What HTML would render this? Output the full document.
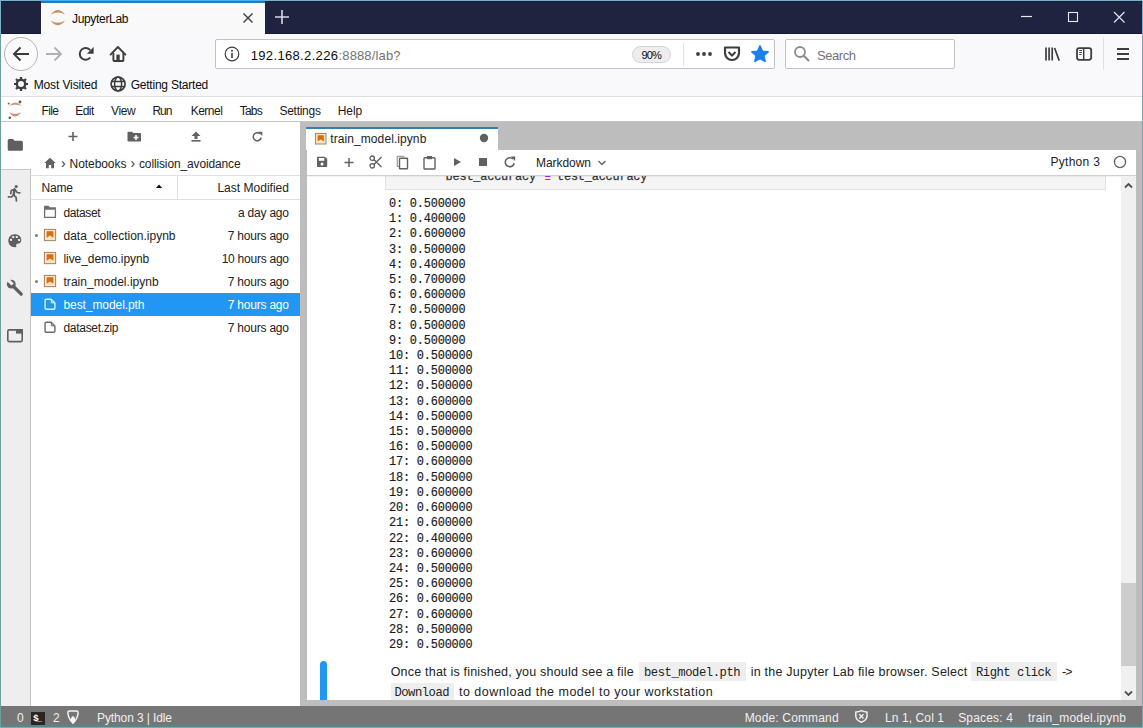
<!DOCTYPE html>
<html><head><meta charset="utf-8">
<style>
*{box-sizing:border-box;margin:0;padding:0}
html,body{width:1143px;height:728px;overflow:hidden;background:#fff;font-family:"Liberation Sans",sans-serif}
.a{position:absolute}
.t{position:absolute;white-space:nowrap;line-height:1}
svg.a{overflow:visible}
</style></head><body>
<div class="a" style="left:0px;top:0px;width:1143px;height:728px;background:#7eb0c8"></div>
<div class="a" style="left:0px;top:34px;width:1px;height:694px;background:#6fa0a0"></div>
<div class="a" style="left:1142px;top:34px;width:1px;height:694px;background:#72a8aa"></div>
<div class="a" style="left:0px;top:727px;width:1143px;height:1px;background:#7eaaaa"></div>
<div class="a" style="left:1px;top:1px;width:1141px;height:1px;background:#0a2540"></div>
<div class="a" style="left:1px;top:2px;width:1141px;height:32px;background:#202340"></div>
<div class="a" style="left:1px;top:33px;width:1141px;height:1px;background:#141a30"></div>
<div class="a" style="left:41px;top:1px;width:224px;height:33px;background:#f9f9fa"></div>
<div class="a" style="left:41px;top:0px;width:224px;height:1px;background:#40b0f0"></div>
<div class="a" style="left:41px;top:1px;width:224px;height:2px;background:#2a7cb0"></div>
<svg class="a" style="left:0px;top:0px;" width="80" height="34" viewBox="0 0 80 34"><path d="M50.5 14.8 Q57.8 5.2 65.2 14.8 Q57.8 10.2 50.5 14.8 Z" fill="#c9925e"/><path d="M50.5 20.5 Q57.8 29.9 65.2 20.5 Q57.8 25.1 50.5 20.5 Z" fill="#c9925e"/></svg>
<div class="t" style="left:72.00px;top:12.64px;font-size:12px;color:#0c0c0d;letter-spacing:-0.330px;font-family:'Liberation Sans',sans-serif;">JupyterLab</div>
<svg class="a" style="left:242px;top:12px;" width="12" height="12" viewBox="0 0 12 12"><path d="M1.5 1.5 L10.5 10.5 M10.5 1.5 L1.5 10.5" stroke="#3a3a3a" stroke-width="1.4"/></svg>
<svg class="a" style="left:274px;top:9px;" width="16" height="16" viewBox="0 0 16 16"><path d="M8 1 V15 M1 8 H15" stroke="#d8d8ec" stroke-width="1.6"/></svg>
<svg class="a" style="left:1020px;top:10px;" width="14" height="12" viewBox="0 0 14 12"><path d="M1 6.5 H12" stroke="#e8e8f0" stroke-width="1.2"/></svg>
<svg class="a" style="left:1066px;top:10px;" width="14" height="14" viewBox="0 0 14 14"><rect x="2.5" y="2.5" width="9" height="9" stroke="#e8e8f0" stroke-width="1.1" fill="none"/></svg>
<svg class="a" style="left:1112px;top:11px;" width="14" height="14" viewBox="0 0 14 14"><path d="M2 1 L12.5 11.5 M12.5 1 L2 11.5" stroke="#e8e8f0" stroke-width="1.1"/></svg>
<div class="a" style="left:1px;top:34px;width:1141px;height:62px;background:#f9f9fb"></div>
<div class="a" style="left:1px;top:96px;width:1141px;height:1px;background:#dfdfe1"></div>
<div class="a" style="left:4px;top:37px;width:34px;height:34px;border-radius:50%;border:1px solid #b4b4b4;background:#fbfbfb"></div>
<svg class="a" style="left:12px;top:46px;" width="18" height="16" viewBox="0 0 18 16"><path d="M2 8 H17 M8.5 1.5 L2 8 L8.5 14.5" stroke="#3a3a3a" stroke-width="1.9" fill="none"/></svg>
<svg class="a" style="left:45px;top:46px;" width="18" height="16" viewBox="0 0 18 16"><path d="M1 8 H16 M9.5 1.5 L16 8 L9.5 14.5" stroke="#b0b0b0" stroke-width="1.8" fill="none"/></svg>
<svg class="a" style="left:74px;top:40px" width="60" height="28" viewBox="74 40 60 28"><path d="M90.3 57.5 A5.9 5.9 0 1 1 90.2 50.1" stroke="#3d3d3d" stroke-width="2" fill="none"/><path d="M93.6 47 V53.8 H86.9 Z" fill="#3d3d3d"/></svg>
<svg class="a" style="left:74px;top:40px" width="60" height="28" viewBox="74 40 60 28"><path d="M110.6 54.6 L117.9 47 L125.4 54.6" stroke="#3d3d3d" stroke-width="1.9" fill="none" stroke-linecap="round" stroke-linejoin="round"/><path d="M113.4 53 V60.2 Q113.4 61 114.2 61 H122.6 Q123.4 61 123.4 60.2 V53" stroke="#3d3d3d" stroke-width="1.9" fill="none"/><rect x="116.4" y="54.6" width="3.3" height="6" fill="#3d3d3d"/></svg>
<div class="a" style="left:215px;top:39px;width:560px;height:30px;border:1px solid #c2c2c4;border-radius:2px;background:#fff"></div>
<svg class="a" style="left:224px;top:46px;" width="16" height="16" viewBox="0 0 16 16"><circle cx="8" cy="8" r="6.8" stroke="#3d3d3d" stroke-width="1.2" fill="none"/><rect x="7.2" y="7" width="1.6" height="5" fill="#3d3d3d"/><circle cx="8" cy="4.7" r="1" fill="#3d3d3d"/></svg>
<div class="t" style="left:250.70px;top:48.90px;font-size:13px;color:#0c0c0d;letter-spacing:0.348px;font-family:'Liberation Sans',sans-serif;">192.168.2.226</div>
<div class="t" style="left:338.50px;top:48.90px;font-size:13px;color:#737373;letter-spacing:0.143px;font-family:'Liberation Sans',sans-serif;">:8888/lab?</div>
<div class="a" style="left:632px;top:46px;width:39px;height:17px;border:1px solid #d4d4d6;border-radius:9px;background:#ededf0"></div>
<div class="t" style="left:641.50px;top:49.79px;font-size:11px;color:#0c0c0d;letter-spacing:-0.908px;font-family:'Liberation Sans',sans-serif;">90%</div>
<div class="a" style="left:683px;top:43px;width:1px;height:23px;background:#e0e0e2"></div>
<svg class="a" style="left:694px;top:49px;" width="20" height="10" viewBox="0 0 20 10"><circle cx="4" cy="5" r="1.9" fill="#3d3d3d"/><circle cx="10" cy="5" r="1.9" fill="#3d3d3d"/><circle cx="16" cy="5" r="1.9" fill="#3d3d3d"/></svg>
<svg class="a" style="left:722px;top:45px;" width="20" height="18" viewBox="0 0 20 18"><path d="M3 2.5 H17 V8 A7 7 0 0 1 3 8 Z" stroke="#3d3d3d" stroke-width="2.2" fill="none" stroke-linejoin="round"/><path d="M6.5 7 L10 10.5 L13.5 7" stroke="#3d3d3d" stroke-width="2" fill="none"/></svg>
<svg class="a" style="left:751px;top:45px;" width="18" height="18" viewBox="0 0 18 18"><path d="M9 1 L11.3 6.3 L17 6.8 L12.7 10.6 L14 16.3 L9 13.3 L4 16.3 L5.3 10.6 L1 6.8 L6.7 6.3 Z" fill="#1a80f0" stroke="#1a80f0" stroke-width="1.8" stroke-linejoin="round"/></svg>
<div class="a" style="left:785px;top:39px;width:170px;height:30px;border:1px solid #c2c2c4;border-radius:2px;background:#fff"></div>
<svg class="a" style="left:793px;top:45px;" width="18" height="18" viewBox="0 0 18 18"><circle cx="7" cy="7" r="5" stroke="#8a8a8a" stroke-width="1.8" fill="none"/><path d="M10.5 10.5 L16 16" stroke="#8a8a8a" stroke-width="2"/></svg>
<div class="t" style="left:817.00px;top:48.50px;font-size:13px;color:#737373;letter-spacing:-0.438px;font-family:'Liberation Sans',sans-serif;">Search</div>
<svg class="a" style="left:1036px;top:40px" width="100" height="28" viewBox="1036 40 100 28"><path d="M1046 47.5 V60.6 M1049.1 47.5 V60.6 M1052.2 47.5 V60.6 M1054.6 48 L1059.2 60.6" stroke="#3d3d3d" stroke-width="1.7" fill="none"/></svg>
<svg class="a" style="left:1036px;top:40px" width="100" height="28" viewBox="1036 40 100 28"><rect x="1077" y="48.2" width="14.2" height="11.6" rx="2.2" stroke="#3d3d3d" stroke-width="1.8" fill="none"/><path d="M1083.7 48.5 V59.5" stroke="#3d3d3d" stroke-width="1.5"/><path d="M1079.3 50.5 H1082 M1079.3 52.5 H1082 M1079.3 54.5 H1081.5" stroke="#3d3d3d" stroke-width="1"/></svg>
<div class="a" style="left:1103px;top:37px;width:1px;height:33px;background:#e0e0e2"></div>
<svg class="a" style="left:1115px;top:46px;" width="16" height="16" viewBox="0 0 16 16"><path d="M2 3 H14 M2 8 H14 M2 13 H14" stroke="#3d3d3d" stroke-width="2"/></svg>
<svg class="a" style="left:13px;top:76px;" width="16" height="16" viewBox="0 0 16 16"><circle cx="8" cy="8" r="4.2" stroke="#3d3d3d" stroke-width="2.4" fill="none"/><path d="M8 1 V3.5 M8 12.5 V15 M1 8 H3.5 M12.5 8 H15 M3 3 L4.8 4.8 M11.2 11.2 L13 13 M13 3 L11.2 4.8 M4.8 11.2 L3 13" stroke="#3d3d3d" stroke-width="2.2"/></svg>
<div class="t" style="left:33.70px;top:78.54px;font-size:12px;color:#0c0c0d;letter-spacing:-0.121px;font-family:'Liberation Sans',sans-serif;">Most Visited</div>
<svg class="a" style="left:104px;top:72px" width="28" height="24" viewBox="104 72 28 24"><circle cx="118.1" cy="84" r="7" stroke="#3d3d3d" stroke-width="1.7" fill="none"/><ellipse cx="118.1" cy="84" rx="3.5" ry="7" stroke="#3d3d3d" stroke-width="1.5" fill="none"/><path d="M111 81.4 H125.2 M111 86.5 H125.2" stroke="#3d3d3d" stroke-width="1.5"/></svg>
<div class="t" style="left:130.70px;top:78.54px;font-size:12px;color:#0c0c0d;letter-spacing:-0.222px;font-family:'Liberation Sans',sans-serif;">Getting Started</div>
<div class="a" style="left:1px;top:97px;width:1141px;height:629px;background:#fff"></div>
<div class="a" style="left:1px;top:97px;width:1141px;height:24px;background:#fff"></div>
<div class="a" style="left:1px;top:121px;width:1141px;height:1px;background:#c4c4c4"></div>
<svg class="a" style="left:0px;top:96px;" width="30" height="26" viewBox="0 0 30 26"><path d="M9 10 Q15.3 3.2 21.6 10 Q15.3 7.6 9 10 Z" fill="#c99a78"/><path d="M9 16.3 Q15.2 24.6 21.4 16.3 Q15.2 19.8 9 16.3 Z" fill="#d48a6a"/><circle cx="20" cy="6" r="1.4" fill="#5a5a5a"/><circle cx="8.7" cy="7.5" r="1" fill="#6a6a6a"/><circle cx="9.8" cy="21.8" r="1.3" fill="#5a5a5a"/></svg>
<div class="t" style="left:41.60px;top:104.64px;font-size:12px;color:#1a1a1a;letter-spacing:-0.645px;font-family:'Liberation Sans',sans-serif;">File</div>
<div class="t" style="left:75.30px;top:104.64px;font-size:12px;color:#1a1a1a;letter-spacing:-0.559px;font-family:'Liberation Sans',sans-serif;">Edit</div>
<div class="t" style="left:111.10px;top:104.64px;font-size:12px;color:#1a1a1a;letter-spacing:-0.431px;font-family:'Liberation Sans',sans-serif;">View</div>
<div class="t" style="left:152.50px;top:104.64px;font-size:12px;color:#1a1a1a;letter-spacing:-1.056px;font-family:'Liberation Sans',sans-serif;">Run</div>
<div class="t" style="left:190.70px;top:104.64px;font-size:12px;color:#1a1a1a;letter-spacing:-0.497px;font-family:'Liberation Sans',sans-serif;">Kernel</div>
<div class="t" style="left:239.70px;top:104.64px;font-size:12px;color:#1a1a1a;letter-spacing:-0.782px;font-family:'Liberation Sans',sans-serif;">Tabs</div>
<div class="t" style="left:279.50px;top:104.64px;font-size:12px;color:#1a1a1a;letter-spacing:-0.280px;font-family:'Liberation Sans',sans-serif;">Settings</div>
<div class="t" style="left:337.70px;top:104.64px;font-size:12px;color:#1a1a1a;letter-spacing:-0.060px;font-family:'Liberation Sans',sans-serif;">Help</div>
<div class="a" style="left:1px;top:122px;width:30px;height:584px;background:#eeeeee"></div>
<div class="a" style="left:1px;top:122px;width:30px;height:47px;background:#fff"></div>
<div class="a" style="left:1px;top:169px;width:30px;height:1px;background:#c8c8c8"></div>
<div class="a" style="left:30px;top:169px;width:1px;height:537px;background:#c6c6c6"></div>
<svg class="a" style="left:0px;top:130px" width="30" height="30" viewBox="0 130 30 30"><path d="M7.7 140.5 Q7.7 139 9.2 139 H13 L14.5 140.8 H21.4 Q22.9 140.8 22.9 142.3 V149.3 Q22.9 150.8 21.4 150.8 H9.2 Q7.7 150.8 7.7 149.3 Z" fill="#5f5f5f"/></svg>
<svg class="a" style="left:0px;top:180px" width="30" height="26" viewBox="0 180 30 26"><circle cx="16.2" cy="186.5" r="1.6" fill="#5f5f5f"/><path d="M14.6 189.4 L11.2 190.6 L10.8 193.6 M14.6 189.4 L13.6 195 L11.5 197 L8.4 196.9 M13.6 195 L16.1 197.4 L16.4 201 M15 189.6 L17.2 192.5 L19.8 192.9" stroke="#5f5f5f" stroke-width="1.7" fill="none" stroke-linecap="round" stroke-linejoin="round"/><path d="M14.6 189.4 L13.6 195" stroke="#5f5f5f" stroke-width="2.4" stroke-linecap="round"/></svg>
<svg class="a" style="left:0px;top:228px" width="30" height="24" viewBox="0 228 30 24"><path d="M14.8 234.3 C18.5 234.3 21.3 236.6 21.3 240 C21.3 242.8 19.2 243.8 17.6 243.8 C16.2 243.8 15.9 245.3 16.3 246.2 C16.5 246.8 16 247.3 15 247.3 C11.2 247.3 8.3 244.5 8.3 240.8 C8.3 237.2 11 234.3 14.8 234.3 Z" fill="#5f5f5f"/><rect x="12.2" y="236" width="2" height="2" fill="#eee"/><rect x="15.8" y="236" width="2" height="2" fill="#eee"/><rect x="10" y="238.8" width="2" height="2" fill="#eee"/><rect x="18.1" y="239" width="2" height="2" fill="#eee"/></svg>
<svg class="a" style="left:0px;top:274px" width="30" height="26" viewBox="0 274 30 26"><path d="M13 286 L21.2 294.2" stroke="#5f5f5f" stroke-width="3.2" stroke-linecap="round"/><circle cx="11.3" cy="284.2" r="4.4" fill="#5f5f5f"/><path d="M9.6 279.2 L13.8 283.4 L11.5 285.6 L7.3 281.4 Z" fill="#eee"/></svg>
<svg class="a" style="left:0px;top:322px" width="30" height="26" viewBox="0 322 30 26"><rect x="7.8" y="329.9" width="14.4" height="11.7" rx="1.3" stroke="#5f5f5f" stroke-width="1.6" fill="none"/><rect x="16" y="329.1" width="7" height="4.5" fill="#5f5f5f"/></svg>
<div class="a" style="left:31px;top:122px;width:269px;height:584px;background:#fff"></div>
<svg class="a" style="left:68px;top:131px;" width="10" height="11" viewBox="0 0 10 11"><path d="M5 1 V10 M0.5 5.5 H9.5" stroke="#616161" stroke-width="1.6"/></svg>
<svg class="a" style="left:127px;top:131px;" width="15" height="11" viewBox="0 0 15 11"><path d="M0.5 1.5 Q0.5 0.7 1.3 0.7 H5 L6.3 2 H13.2 Q14 2 14 2.8 V9.7 Q14 10.5 13.2 10.5 H1.3 Q0.5 10.5 0.5 9.7 Z" fill="#616161"/><path d="M9 4 V9 M6.5 6.5 H11.5" stroke="#fff" stroke-width="1.6"/></svg>
<svg class="a" style="left:191px;top:131px;" width="10" height="11" viewBox="0 0 10 11"><path d="M5 0.5 L9.5 5 H6.5 V8 H3.5 V5 H0.5 Z" fill="#616161"/><rect x="0.5" y="9" width="9" height="1.6" fill="#616161"/></svg>
<svg class="a" style="left:252px;top:131px;" width="11" height="11" viewBox="0 0 11 11"><path d="M9.2 6.5 A4 4 0 1 1 8 2.8" stroke="#616161" stroke-width="1.5" fill="none"/><path d="M6.2 0.8 L10.3 0.8 L10.3 4.9 Z" fill="#616161"/></svg>
<svg class="a" style="left:44px;top:157px;" width="12" height="12" viewBox="0 0 12 12"><path d="M6 0.8 L0.3 6 H2 V11.2 H4.8 V8 H7.2 V11.2 H10 V6 H11.7 Z" fill="#616161"/></svg>
<div class="t" style="left:61.00px;top:155.85px;font-size:14px;color:#333;letter-spacing:0.000px;font-family:'Liberation Sans',sans-serif;">›</div>
<div class="t" style="left:69.60px;top:157.54px;font-size:12px;color:#222;letter-spacing:-0.071px;font-family:'Liberation Sans',sans-serif;">Notebooks</div>
<div class="t" style="left:130.50px;top:155.85px;font-size:14px;color:#333;letter-spacing:0.000px;font-family:'Liberation Sans',sans-serif;">›</div>
<div class="t" style="left:139.00px;top:157.54px;font-size:12px;color:#222;letter-spacing:-0.137px;font-family:'Liberation Sans',sans-serif;">collision_avoidance</div>
<div class="a" style="left:31px;top:175px;width:269px;height:1px;background:#e0e0e0"></div>
<div class="a" style="left:31px;top:199px;width:269px;height:1px;background:#e0e0e0"></div>
<div class="a" style="left:177px;top:176px;width:1px;height:23px;background:#e0e0e0"></div>
<div class="t" style="left:41.50px;top:182.04px;font-size:12px;color:#222;letter-spacing:-0.169px;font-family:'Liberation Sans',sans-serif;">Name</div>
<svg class="a" style="left:150px;top:180px" width="16" height="10" viewBox="150 180 16 10"><path d="M155.9 187.9 L159.05 184.4 L162.2 187.9 Z" fill="#111"/></svg>
<div class="t" style="left:217.40px;top:182.04px;font-size:12px;color:#222;letter-spacing:0.019px;font-family:'Liberation Sans',sans-serif;">Last Modified</div>
<svg class="a" style="left:43px;top:205px;" width="14" height="14" viewBox="0 0 14 14"><path d="M1.6 4 V12.4 H12.4 V4.5" stroke="#6e6e6e" stroke-width="1.3" fill="none"/><path d="M1 1.2 Q1 0.8 1.5 0.8 H5.5 L6.8 2.2 H12.5 Q13 2.2 13 2.7 V4.8 H1 Z" fill="#6e6e6e"/></svg>
<div class="t" style="left:63.50px;top:207.04px;font-size:12px;color:#222;letter-spacing:-0.393px;font-family:'Liberation Sans',sans-serif;">dataset</div>
<div class="t" style="left:238.00px;top:207.04px;font-size:12px;color:#222;letter-spacing:-0.213px;font-family:'Liberation Sans',sans-serif;">a day ago</div>
<svg class="a" style="left:43px;top:228px;" width="14" height="14" viewBox="0 0 14 14"><rect x="1.4" y="1.4" width="11.2" height="11.2" fill="#ffe6c2" stroke="#a88a6a" stroke-width="1.1"/><path d="M3.6 3.2 H10.4 V9.8 L7 7.6 L3.6 9.8 Z" fill="#da6c14"/></svg>
<div class="a" style="left:35px;top:234px;width:3px;height:3px;background:#5f8f6f;border-radius:50%"></div>
<div class="t" style="left:63.50px;top:230.04px;font-size:12px;color:#222;letter-spacing:-0.004px;font-family:'Liberation Sans',sans-serif;">data_collection.ipynb</div>
<div class="t" style="left:227.70px;top:230.04px;font-size:12px;color:#222;letter-spacing:-0.208px;font-family:'Liberation Sans',sans-serif;">7 hours ago</div>
<svg class="a" style="left:43px;top:251px;" width="14" height="14" viewBox="0 0 14 14"><rect x="1.4" y="1.4" width="11.2" height="11.2" fill="#ffe6c2" stroke="#a88a6a" stroke-width="1.1"/><path d="M3.6 3.2 H10.4 V9.8 L7 7.6 L3.6 9.8 Z" fill="#da6c14"/></svg>
<div class="t" style="left:63.50px;top:253.04px;font-size:12px;color:#222;letter-spacing:-0.072px;font-family:'Liberation Sans',sans-serif;">live_demo.ipynb</div>
<div class="t" style="left:221.70px;top:253.04px;font-size:12px;color:#222;letter-spacing:-0.250px;font-family:'Liberation Sans',sans-serif;">10 hours ago</div>
<svg class="a" style="left:43px;top:274px;" width="14" height="14" viewBox="0 0 14 14"><rect x="1.4" y="1.4" width="11.2" height="11.2" fill="#ffe6c2" stroke="#a88a6a" stroke-width="1.1"/><path d="M3.6 3.2 H10.4 V9.8 L7 7.6 L3.6 9.8 Z" fill="#da6c14"/></svg>
<div class="a" style="left:35px;top:280px;width:3px;height:3px;background:#5f8f6f;border-radius:50%"></div>
<div class="t" style="left:63.50px;top:276.04px;font-size:12px;color:#222;letter-spacing:0.030px;font-family:'Liberation Sans',sans-serif;">train_model.ipynb</div>
<div class="t" style="left:227.70px;top:276.04px;font-size:12px;color:#222;letter-spacing:-0.208px;font-family:'Liberation Sans',sans-serif;">7 hours ago</div>
<div class="a" style="left:31px;top:293px;width:269px;height:23px;background:#2196f3"></div>
<svg class="a" style="left:43px;top:297px;" width="14" height="14" viewBox="0 0 14 14"><path d="M2.1 3.3 Q2.1 2.2 3.2 2.2 H8.2 L11.9 5.9 V11.2 Q11.9 12.2 10.9 12.2 H3.2 Q2.1 12.2 2.1 11.1 Z" stroke="#d8f4ff" stroke-width="1.4" fill="none" stroke-linejoin="round"/><path d="M8.3 2.6 V5.8 H11.6" stroke="#d8f4ff" stroke-width="1" fill="none"/></svg>
<div class="t" style="left:63.50px;top:299.04px;font-size:12px;color:#fff;letter-spacing:-0.081px;font-family:'Liberation Sans',sans-serif;">best_model.pth</div>
<div class="t" style="left:227.70px;top:299.04px;font-size:12px;color:#fff;letter-spacing:-0.208px;font-family:'Liberation Sans',sans-serif;">7 hours ago</div>
<svg class="a" style="left:43px;top:320px;" width="14" height="14" viewBox="0 0 14 14"><path d="M2.1 3.3 Q2.1 2.2 3.2 2.2 H8.2 L11.9 5.9 V11.2 Q11.9 12.2 10.9 12.2 H3.2 Q2.1 12.2 2.1 11.1 Z" stroke="#6a6a6a" stroke-width="1.4" fill="none" stroke-linejoin="round"/><path d="M8.3 2.6 V5.8 H11.6" stroke="#6a6a6a" stroke-width="1" fill="none"/></svg>
<div class="t" style="left:63.50px;top:322.04px;font-size:12px;color:#222;letter-spacing:-0.303px;font-family:'Liberation Sans',sans-serif;">dataset.zip</div>
<div class="t" style="left:227.70px;top:322.04px;font-size:12px;color:#222;letter-spacing:-0.208px;font-family:'Liberation Sans',sans-serif;">7 hours ago</div>
<div class="a" style="left:300px;top:122px;width:842px;height:584px;background:#bdbdbd"></div>
<div class="a" style="left:307px;top:150px;width:829px;height:550px;background:#fff"></div>
<div class="a" style="left:385px;top:150px;width:721px;height:40px;background:#f5f5f5;border:1px solid #e0e0e0"></div>
<div class="t" style="left:445.60px;top:172.38px;font-size:11.9px;color:#333;letter-spacing:-0.195px;font-family:'Liberation Mono',monospace;-webkit-text-stroke:0.25px #333">best_accuracy</div>
<div class="t" style="left:544.50px;top:174.45px;font-size:10.5px;color:#aa22ff;letter-spacing:0.000px;font-family:'Liberation Mono',monospace;">=</div>
<div class="t" style="left:557.00px;top:172.38px;font-size:11.9px;color:#333;letter-spacing:-0.195px;font-family:'Liberation Mono',monospace;-webkit-text-stroke:0.25px #333">test_accuracy</div>
<div class="t" style="left:389.00px;top:198.88px;font-size:11.9px;color:#1a1a1a;letter-spacing:-0.186px;font-family:'Liberation Mono',monospace;-webkit-text-stroke:0.15px #1a1a1a">0: 0.500000</div>
<div class="t" style="left:389.00px;top:214.09px;font-size:11.9px;color:#1a1a1a;letter-spacing:-0.186px;font-family:'Liberation Mono',monospace;-webkit-text-stroke:0.15px #1a1a1a">1: 0.400000</div>
<div class="t" style="left:389.00px;top:229.30px;font-size:11.9px;color:#1a1a1a;letter-spacing:-0.186px;font-family:'Liberation Mono',monospace;-webkit-text-stroke:0.15px #1a1a1a">2: 0.600000</div>
<div class="t" style="left:389.00px;top:244.51px;font-size:11.9px;color:#1a1a1a;letter-spacing:-0.186px;font-family:'Liberation Mono',monospace;-webkit-text-stroke:0.15px #1a1a1a">3: 0.500000</div>
<div class="t" style="left:389.00px;top:259.72px;font-size:11.9px;color:#1a1a1a;letter-spacing:-0.186px;font-family:'Liberation Mono',monospace;-webkit-text-stroke:0.15px #1a1a1a">4: 0.400000</div>
<div class="t" style="left:389.00px;top:274.93px;font-size:11.9px;color:#1a1a1a;letter-spacing:-0.186px;font-family:'Liberation Mono',monospace;-webkit-text-stroke:0.15px #1a1a1a">5: 0.700000</div>
<div class="t" style="left:389.00px;top:290.14px;font-size:11.9px;color:#1a1a1a;letter-spacing:-0.186px;font-family:'Liberation Mono',monospace;-webkit-text-stroke:0.15px #1a1a1a">6: 0.600000</div>
<div class="t" style="left:389.00px;top:305.35px;font-size:11.9px;color:#1a1a1a;letter-spacing:-0.186px;font-family:'Liberation Mono',monospace;-webkit-text-stroke:0.15px #1a1a1a">7: 0.500000</div>
<div class="t" style="left:389.00px;top:320.56px;font-size:11.9px;color:#1a1a1a;letter-spacing:-0.186px;font-family:'Liberation Mono',monospace;-webkit-text-stroke:0.15px #1a1a1a">8: 0.500000</div>
<div class="t" style="left:389.00px;top:335.77px;font-size:11.9px;color:#1a1a1a;letter-spacing:-0.186px;font-family:'Liberation Mono',monospace;-webkit-text-stroke:0.15px #1a1a1a">9: 0.500000</div>
<div class="t" style="left:389.00px;top:350.98px;font-size:11.9px;color:#1a1a1a;letter-spacing:-0.182px;font-family:'Liberation Mono',monospace;-webkit-text-stroke:0.15px #1a1a1a">10: 0.500000</div>
<div class="t" style="left:389.00px;top:366.19px;font-size:11.9px;color:#1a1a1a;letter-spacing:-0.182px;font-family:'Liberation Mono',monospace;-webkit-text-stroke:0.15px #1a1a1a">11: 0.500000</div>
<div class="t" style="left:389.00px;top:381.40px;font-size:11.9px;color:#1a1a1a;letter-spacing:-0.182px;font-family:'Liberation Mono',monospace;-webkit-text-stroke:0.15px #1a1a1a">12: 0.500000</div>
<div class="t" style="left:389.00px;top:396.61px;font-size:11.9px;color:#1a1a1a;letter-spacing:-0.182px;font-family:'Liberation Mono',monospace;-webkit-text-stroke:0.15px #1a1a1a">13: 0.600000</div>
<div class="t" style="left:389.00px;top:411.82px;font-size:11.9px;color:#1a1a1a;letter-spacing:-0.182px;font-family:'Liberation Mono',monospace;-webkit-text-stroke:0.15px #1a1a1a">14: 0.500000</div>
<div class="t" style="left:389.00px;top:427.03px;font-size:11.9px;color:#1a1a1a;letter-spacing:-0.182px;font-family:'Liberation Mono',monospace;-webkit-text-stroke:0.15px #1a1a1a">15: 0.500000</div>
<div class="t" style="left:389.00px;top:442.24px;font-size:11.9px;color:#1a1a1a;letter-spacing:-0.182px;font-family:'Liberation Mono',monospace;-webkit-text-stroke:0.15px #1a1a1a">16: 0.500000</div>
<div class="t" style="left:389.00px;top:457.45px;font-size:11.9px;color:#1a1a1a;letter-spacing:-0.182px;font-family:'Liberation Mono',monospace;-webkit-text-stroke:0.15px #1a1a1a">17: 0.600000</div>
<div class="t" style="left:389.00px;top:472.66px;font-size:11.9px;color:#1a1a1a;letter-spacing:-0.182px;font-family:'Liberation Mono',monospace;-webkit-text-stroke:0.15px #1a1a1a">18: 0.500000</div>
<div class="t" style="left:389.00px;top:487.87px;font-size:11.9px;color:#1a1a1a;letter-spacing:-0.182px;font-family:'Liberation Mono',monospace;-webkit-text-stroke:0.15px #1a1a1a">19: 0.600000</div>
<div class="t" style="left:389.00px;top:503.08px;font-size:11.9px;color:#1a1a1a;letter-spacing:-0.182px;font-family:'Liberation Mono',monospace;-webkit-text-stroke:0.15px #1a1a1a">20: 0.600000</div>
<div class="t" style="left:389.00px;top:518.29px;font-size:11.9px;color:#1a1a1a;letter-spacing:-0.182px;font-family:'Liberation Mono',monospace;-webkit-text-stroke:0.15px #1a1a1a">21: 0.600000</div>
<div class="t" style="left:389.00px;top:533.50px;font-size:11.9px;color:#1a1a1a;letter-spacing:-0.182px;font-family:'Liberation Mono',monospace;-webkit-text-stroke:0.15px #1a1a1a">22: 0.400000</div>
<div class="t" style="left:389.00px;top:548.71px;font-size:11.9px;color:#1a1a1a;letter-spacing:-0.182px;font-family:'Liberation Mono',monospace;-webkit-text-stroke:0.15px #1a1a1a">23: 0.600000</div>
<div class="t" style="left:389.00px;top:563.92px;font-size:11.9px;color:#1a1a1a;letter-spacing:-0.182px;font-family:'Liberation Mono',monospace;-webkit-text-stroke:0.15px #1a1a1a">24: 0.500000</div>
<div class="t" style="left:389.00px;top:579.13px;font-size:11.9px;color:#1a1a1a;letter-spacing:-0.182px;font-family:'Liberation Mono',monospace;-webkit-text-stroke:0.15px #1a1a1a">25: 0.600000</div>
<div class="t" style="left:389.00px;top:594.34px;font-size:11.9px;color:#1a1a1a;letter-spacing:-0.182px;font-family:'Liberation Mono',monospace;-webkit-text-stroke:0.15px #1a1a1a">26: 0.600000</div>
<div class="t" style="left:389.00px;top:609.55px;font-size:11.9px;color:#1a1a1a;letter-spacing:-0.182px;font-family:'Liberation Mono',monospace;-webkit-text-stroke:0.15px #1a1a1a">27: 0.600000</div>
<div class="t" style="left:389.00px;top:624.76px;font-size:11.9px;color:#1a1a1a;letter-spacing:-0.182px;font-family:'Liberation Mono',monospace;-webkit-text-stroke:0.15px #1a1a1a">28: 0.500000</div>
<div class="t" style="left:389.00px;top:639.97px;font-size:11.9px;color:#1a1a1a;letter-spacing:-0.182px;font-family:'Liberation Mono',monospace;-webkit-text-stroke:0.15px #1a1a1a">29: 0.500000</div>
<div class="a" style="left:320px;top:661px;width:7px;height:39px;background:#2196f3;border-radius:3.5px 3.5px 0 0"></div>
<div class="t" style="left:390.70px;top:665.62px;font-size:12.5px;color:#222;letter-spacing:0.206px;font-family:'Liberation Sans',sans-serif;">Once that is finished, you should see a file</div>
<div class="a" style="left:638.5px;top:662px;width:107.5px;height:19px;background:#eeeeee"></div>
<div class="t" style="left:644.00px;top:666.85px;font-size:12.2px;color:#222;letter-spacing:-0.447px;font-family:'Liberation Mono',monospace;">best_model.pth</div>
<div class="t" style="left:750.70px;top:665.62px;font-size:12.5px;color:#222;letter-spacing:0.231px;font-family:'Liberation Sans',sans-serif;">in the Jupyter Lab file browser. Select</div>
<div class="a" style="left:971px;top:662px;width:85.5px;height:19px;background:#eeeeee"></div>
<div class="t" style="left:976.00px;top:666.85px;font-size:12.2px;color:#222;letter-spacing:-0.484px;font-family:'Liberation Mono',monospace;">Right click</div>
<div class="t" style="left:1060.60px;top:666.85px;font-size:12.2px;color:#222;letter-spacing:-2.644px;font-family:'Liberation Mono',monospace;">-&gt;</div>
<div class="a" style="left:390.7px;top:683px;width:63.6px;height:19px;background:#eeeeee"></div>
<div class="t" style="left:394.40px;top:687.35px;font-size:12.2px;color:#222;letter-spacing:-0.482px;font-family:'Liberation Mono',monospace;">Download</div>
<div class="t" style="left:459.00px;top:686.12px;font-size:12.5px;color:#222;letter-spacing:0.486px;font-family:'Liberation Sans',sans-serif;">to download the model to your workstation</div>
<div class="a" style="left:1121px;top:176px;width:15px;height:524px;background:#f0f0f0"></div>
<div class="a" style="left:1121px;top:583px;width:15px;height:83px;background:#cdcdcd"></div>
<svg class="a" style="left:1124px;top:182px;" width="9" height="7" viewBox="0 0 9 7"><path d="M1 5.5 L4.5 2 L8 5.5" stroke="#505050" stroke-width="1.8" fill="none"/></svg>
<svg class="a" style="left:1124px;top:690px;" width="9" height="7" viewBox="0 0 9 7"><path d="M1 1.5 L4.5 5 L8 1.5" stroke="#505050" stroke-width="1.8" fill="none"/></svg>
<div class="a" style="left:1141px;top:122px;width:1px;height:584px;background:#b0c4ca"></div>
<div class="a" style="left:300px;top:700px;width:842px;height:6px;background:#bdbdbd"></div>
<div class="a" style="left:300px;top:122px;width:842px;height:28px;background:#bdbdbd"></div>
<div class="a" style="left:306px;top:127px;width:192px;height:23px;background:#fff"></div>
<div class="a" style="left:306px;top:127px;width:192px;height:2px;background:#3a7ca8"></div>
<svg class="a" style="left:314px;top:132px;" width="13" height="13" viewBox="0 0 13 13"><rect x="1.5" y="1.5" width="10.5" height="10.5" fill="#ffe6c2" stroke="#a88a6a" stroke-width="1.1"/><path d="M3.6 3.3 H9.9 V9.6 L6.75 7.5 L3.6 9.6 Z" fill="#da6c14"/></svg>
<div class="t" style="left:330.30px;top:133.34px;font-size:12px;color:#222;letter-spacing:0.080px;font-family:'Liberation Sans',sans-serif;">train_model.ipynb</div>
<svg class="a" style="left:479px;top:133px;" width="10" height="10" viewBox="0 0 10 10"><circle cx="5" cy="5" r="4.2" fill="#616161"/></svg>
<div class="a" style="left:307px;top:150px;width:829px;height:25px;background:#fff"></div>
<div class="a" style="left:307px;top:175px;width:829px;height:1px;background:#cfcfcf"></div>
<div class="a" style="left:307px;top:176px;width:814px;height:1px;background:rgba(0,0,0,0.05)"></div>
<svg class="a" style="left:316px;top:156px;" width="12" height="12" viewBox="0 0 12 12"><path d="M1 1.5 Q1 0.8 1.7 0.8 H9 L11.2 3 V10.3 Q11.2 11 10.5 11 H1.7 Q1 11 1 10.3 Z" fill="#616161"/><rect x="2.8" y="2" width="5.5" height="2.8" fill="#fff"/><circle cx="6" cy="8" r="1.5" fill="#fff"/></svg>
<svg class="a" style="left:344px;top:157px;" width="10" height="11" viewBox="0 0 10 11"><path d="M5 1 V10 M0.5 5.5 H9.5" stroke="#616161" stroke-width="1.5"/></svg>
<svg class="a" style="left:369px;top:155px;" width="14" height="14" viewBox="0 0 14 14"><circle cx="3.2" cy="3.2" r="2.2" stroke="#616161" stroke-width="1.3" fill="none"/><circle cx="3.2" cy="10.8" r="2.2" stroke="#616161" stroke-width="1.3" fill="none"/><path d="M4.8 4.6 L12.5 12 M4.8 9.4 L12.5 2" stroke="#616161" stroke-width="1.4"/></svg>
<svg class="a" style="left:396px;top:155px;" width="13" height="15" viewBox="0 0 13 15"><path d="M3.5 11.5 H1.3 V1.3 H8.5" stroke="#9e9e9e" stroke-width="1.2" fill="none"/><rect x="3.5" y="3.3" width="8" height="10.5" rx="0.5" stroke="#616161" stroke-width="1.4" fill="none"/></svg>
<svg class="a" style="left:423px;top:155px;" width="13" height="15" viewBox="0 0 13 15"><rect x="1" y="2.8" width="11" height="11.2" rx="0.8" stroke="#616161" stroke-width="1.4" fill="none"/><rect x="4" y="1" width="5" height="3.2" fill="#616161"/></svg>
<svg class="a" style="left:453px;top:157px;" width="9" height="10" viewBox="0 0 9 10"><path d="M1 1 L8 5 L1 9 Z" fill="#616161"/></svg>
<div class="a" style="left:479px;top:158px;width:8px;height:8px;background:#616161"></div>
<svg class="a" style="left:504px;top:156px;" width="12" height="12" viewBox="0 0 12 12"><path d="M10.2 7.2 A4.5 4.5 0 1 1 9 3" stroke="#616161" stroke-width="1.6" fill="none"/><path d="M6.8 0.6 L11.2 0.6 L11.2 5 Z" fill="#616161"/></svg>
<div class="t" style="left:536.00px;top:156.84px;font-size:12px;color:#222;letter-spacing:-0.050px;font-family:'Liberation Sans',sans-serif;">Markdown</div>
<svg class="a" style="left:597px;top:158.5px;" width="10" height="8" viewBox="0 0 10 8"><path d="M1.5 2 L5 5.5 L8.5 2" stroke="#616161" stroke-width="1.3" fill="none"/></svg>
<div class="t" style="left:1050.50px;top:156.44px;font-size:12px;color:#222;letter-spacing:0.277px;font-family:'Liberation Sans',sans-serif;">Python 3</div>
<svg class="a" style="left:1113px;top:155px;" width="14" height="14" viewBox="0 0 14 14"><circle cx="7" cy="7" r="5.6" stroke="#616161" stroke-width="1.3" fill="none"/></svg>
<div class="a" style="left:1px;top:706px;width:1141px;height:18px;background:#757575"></div>
<div class="a" style="left:1px;top:724px;width:1141px;height:1px;background:#6c7a7b"></div>
<div class="a" style="left:1px;top:725px;width:1141px;height:1px;background:#608282"></div>
<div class="a" style="left:1px;top:726px;width:1141px;height:1px;background:#5c8484"></div>
<div class="t" style="left:17.00px;top:711.64px;font-size:12px;color:#f0f0f0;letter-spacing:0.000px;font-family:'Liberation Sans',sans-serif;">0</div>
<div class="a" style="left:31px;top:711.5px;width:14px;height:13px;background:#262626"></div>
<div class="t" style="left:33.30px;top:713.16px;font-size:9.5px;color:#fff;letter-spacing:-2.066px;font-family:'Liberation Sans',sans-serif;font-weight:bold">$_</div>
<div class="t" style="left:53.00px;top:711.64px;font-size:12px;color:#f0f0f0;letter-spacing:0.000px;font-family:'Liberation Sans',sans-serif;">2</div>
<svg class="a" style="left:60px;top:704px" width="25" height="22" viewBox="60 704 25 22"><path d="M67.9 712.6 Q67.9 711.1 69.4 711.1 H76.6 Q78.1 711.1 78.1 712.6 Q78.1 718.3 73 723.1 Q67.9 718.3 67.9 712.6 Z" stroke="#f4f4f4" stroke-width="1.5" fill="none" stroke-linejoin="round"/><path d="M70.6 721.3 Q71 716.3 73 716.3 Q75 716.3 75.4 721.3 L73 723.1 Z" fill="#f4f4f4"/></svg>
<div class="t" style="left:97.00px;top:711.64px;font-size:12px;color:#f0f0f0;letter-spacing:-0.107px;font-family:'Liberation Sans',sans-serif;">Python 3 | Idle</div>
<div class="t" style="left:744.70px;top:711.64px;font-size:12px;color:#f0f0f0;letter-spacing:0.156px;font-family:'Liberation Sans',sans-serif;">Mode: Command</div>
<svg class="a" style="left:850px;top:704px" width="22" height="22" viewBox="850 704 22 22"><path d="M861.4 710.6 Q864 712 867 712 V716 Q867 720 861.4 722.3 Q855.8 720 855.8 716 V712 Q858.8 712 861.4 710.6 Z" stroke="#f2f2f2" stroke-width="1.5" fill="none" stroke-linejoin="round"/><path d="M859.3 714.2 L863.5 718.4 M863.5 714.2 L859.3 718.4" stroke="#f2f2f2" stroke-width="1.4"/></svg>
<div class="t" style="left:885.00px;top:711.64px;font-size:12px;color:#f0f0f0;letter-spacing:0.097px;font-family:'Liberation Sans',sans-serif;">Ln 1, Col 1</div>
<div class="t" style="left:958.20px;top:711.64px;font-size:12px;color:#f0f0f0;letter-spacing:0.167px;font-family:'Liberation Sans',sans-serif;">Spaces: 4</div>
<div class="t" style="left:1027.90px;top:711.64px;font-size:12px;color:#f0f0f0;letter-spacing:0.212px;font-family:'Liberation Sans',sans-serif;">train_model.ipynb</div>
</body></html>
